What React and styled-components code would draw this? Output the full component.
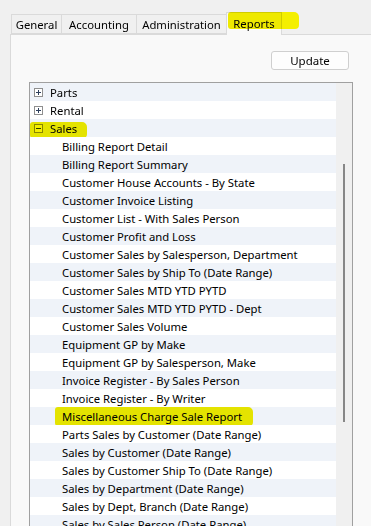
import React from "react";
import styled, { createGlobalStyle } from "styled-components";

const GlobalStyle = createGlobalStyle`
  html, body {
    margin: 0;
    padding: 0;
    background: #f0f0f0;
    overflow: hidden;
  }
  body {
    font-family: "Noto Sans", "Open Sans", sans-serif;
    font-size: 11.3px;
    color: #000;
  }
`;

const Window = styled.div`
  padding-top: 12px;
  height: 526px;
  overflow: hidden;
  box-sizing: border-box;
`;

const TabStrip = styled.div`
  display: flex;
  align-items: flex-end;
  height: 22px;
  margin-left: 11px;
  position: relative;
  z-index: 1;
`;

const Tab = styled.div`
  position: relative;
  box-sizing: border-box;
  width: ${(p) => p.$w}px;
  height: ${(p) => (p.$active ? "23px" : "20px")};
  margin-bottom: ${(p) => (p.$active ? "-1px" : "0")};
  margin-left: -1px;
  padding: ${(p) => (p.$active ? "0 0 2px" : "0")};
  display: flex;
  align-items: center;
  justify-content: center;
  border: 1px solid #dadada;
  border-bottom: ${(p) => (p.$active ? "none" : "1px solid #dadada")};
  background: ${(p) => (p.$active ? "#f9f9f9" : "#f0f0f0")};
  white-space: nowrap;
  &:first-child {
    margin-left: 0;
  }
`;

const Highlight = styled.span`
  position: absolute;
  left: ${(p) => p.$x}px;
  top: ${(p) => p.$y}px;
  width: ${(p) => p.$w}px;
  height: ${(p) => p.$h}px;
  background: #f4ef00;
  mix-blend-mode: multiply;
  border-radius: 3px 5px 4px 3px;
  filter: blur(0.4px);
  pointer-events: none;
`;

const Panel = styled.div`
  margin-left: 10px;
  height: 620px;
  box-sizing: border-box;
  border: 1px solid #dadada;
  border-right: none;
  background: #f9f9f9;
  padding: 16px 17px 0 18px;
`;

const ButtonRow = styled.div`
  display: flex;
  justify-content: flex-end;
  padding-right: 5px;
  margin-bottom: 12px;
`;

const Button = styled.button`
  box-sizing: border-box;
  width: 78px;
  height: 19px;
  padding: 0;
  border: 1px solid #cfcfcf;
  border-radius: 3px;
  background: #fdfdfd;
  font: inherit;
  font-size: 11.5px;
  color: #000;
  line-height: 17px;
`;

const ListBox = styled.div`
  box-sizing: border-box;
  width: 324px;
  height: 560px;
  border: 1px solid #a0a0a0;
  background: #fff;
  display: flex;
`;

const Rows = styled.div`
  width: 306px;
  display: flex;
  flex-direction: column;
`;

const Row = styled.div`
  position: relative;
  box-sizing: border-box;
  height: 18px;
  line-height: 18px;
  flex: none;
  display: flex;
  align-items: center;
  gap: 7px;
  padding-top: 1px;
  padding-left: ${(p) => (p.$child ? "32px" : "4px")};
  background: ${(p) => (p.$alt ? "#eff3f9" : "#fff")};
  white-space: nowrap;
`;

const ScrollTrack = styled.div`
  width: 16px;
  background: #f0f0f0;
  padding-top: 81px;
  box-sizing: border-box;
`;

const Thumb = styled.div`
  width: 2px;
  height: 258px;
  margin-left: 7px;
  background: #878787;
`;

function Expander({ open }) {
  return (
    <svg width="9" height="9" viewBox="0 0 9 9" style={{ flex: "none", marginTop: -1 }}>
      <rect x="0.5" y="0.5" width="8" height="8" fill="#fff" stroke="#8f8f8f" />
      <path d="M2 4.5h5" stroke="#2e3f5c" />
      {!open && <path d="M4.5 2v5" stroke="#2e3f5c" />}
    </svg>
  );
}

const tabs = [
  { label: "General", w: 51 },
  { label: "Accounting", w: 76 },
  { label: "Administration", w: 91 },
  { label: "Reports", w: 56, active: true },
];

const reports = [
  "Billing Report Detail",
  "Billing Report Summary",
  "Customer House Accounts - By State",
  "Customer Invoice Listing",
  "Customer List - With Sales Person",
  "Customer Profit and Loss",
  "Customer Sales by Salesperson, Department",
  "Customer Sales by Ship To (Date Range)",
  "Customer Sales MTD YTD PYTD",
  "Customer Sales MTD YTD PYTD - Dept",
  "Customer Sales Volume",
  "Equipment GP by Make",
  "Equipment GP by Salesperson, Make",
  "Invoice Register - By Sales Person",
  "Invoice Register - By Writer",
  "Miscellaneous Charge Sale Report",
  "Parts Sales by Customer (Date Range)",
  "Sales by Customer (Date Range)",
  "Sales by Customer Ship To (Date Range)",
  "Sales by Department (Date Range)",
  "Sales by Dept, Branch (Date Range)",
  "Sales by Sales Person (Date Range)",
];

const items = [
  { label: "Parts", group: true },
  { label: "Rental", group: true },
  { label: "Sales", group: true, open: true, mark: { x: 0, y: 3, w: 57, h: 16 } },
  ...reports.map((label) => ({
    label,
    mark:
      label === "Miscellaneous Charge Sale Report"
        ? { x: 25, y: 0, w: 198, h: 19 }
        : null,
  })),
];

export default function App() {
  return (
    <>
      <GlobalStyle />
      <Window>
        <TabStrip>
          {tabs.map((t) => (
            <Tab key={t.label} $w={t.w} $active={t.active}>
              {t.label}
              {t.active && <Highlight $x={1} $y={-1} $w={71} $h={17} />}
            </Tab>
          ))}
        </TabStrip>
        <Panel>
          <ButtonRow>
            <Button>Update</Button>
          </ButtonRow>
          <ListBox>
            <Rows>
              {items.map((it, i) => (
                <Row key={it.label} $alt={i % 2 === 0} $child={!it.group}>
                  {it.group && <Expander open={it.open} />}
                  {it.label}
                  {it.mark && (
                    <Highlight $x={it.mark.x} $y={it.mark.y} $w={it.mark.w} $h={it.mark.h} />
                  )}
                </Row>
              ))}
            </Rows>
            <ScrollTrack>
              <Thumb />
            </ScrollTrack>
          </ListBox>
        </Panel>
      </Window>
    </>
  );
}
